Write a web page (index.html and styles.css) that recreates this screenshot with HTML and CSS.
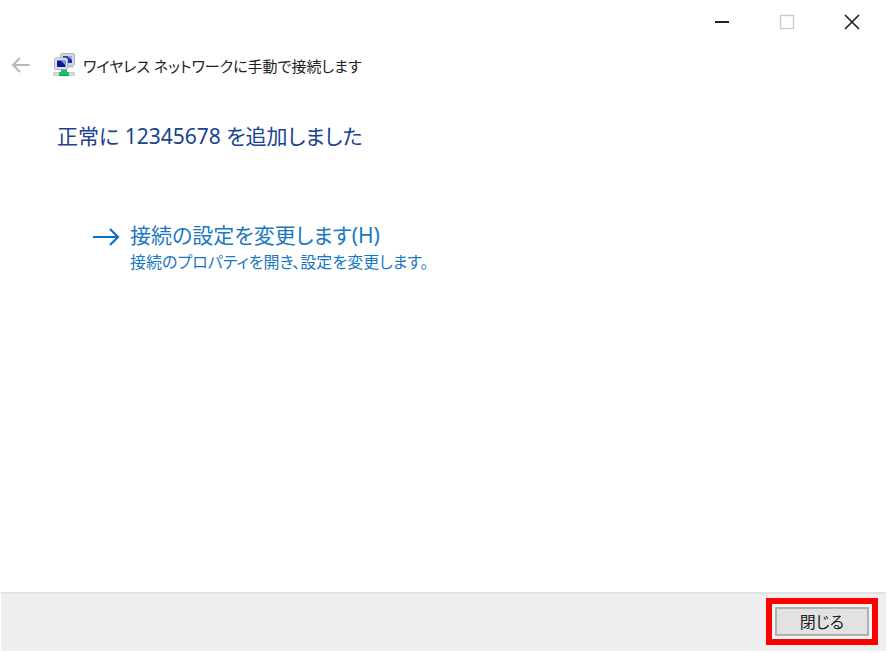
FILE: index.html
```html
<!DOCTYPE html>
<html lang="ja">
<head>
  <meta charset="UTF-8" />
  <meta name="viewport" content="width=device-width, initial-scale=1.0"/>
  <title>ワイヤレス ネットワークに手動で接続します</title>
  <link rel="stylesheet" href="styles.css">
</head>
<body>

<div class="window">
  <div class="titlebar">
    <button class="caption-btn" type="button" aria-label="最小化">
      <svg width="16" height="16" viewBox="0 0 16 16"><path d="M1 8h14" stroke="#222" stroke-width="2"/></svg>
    </button>
    <button class="caption-btn" type="button" aria-label="最大化" disabled>
      <svg width="16" height="16" viewBox="0 0 16 16"><rect x="1.500" y="1.500" width="13" height="13" fill="none" stroke="#c8c8c8" stroke-width="1.300"/></svg>
    </button>
    <button class="caption-btn" type="button" aria-label="閉じる">
      <svg width="16" height="16" viewBox="0 0 16 16"><path d="M1 1l14 14M15 1L1 15" stroke="#222" stroke-width="1.700"/></svg>
    </button>
  </div>

  <header class="header">
    <button class="back" type="button" aria-label="戻る" disabled>
      <svg width="20" height="18" viewBox="0 0 20 18"><path d="M18.500 9H2.500M9 2L2 9l7 7" fill="none" stroke="#b8b8b8" stroke-width="2.200"/></svg>
    </button>
    <svg class="net-icon" width="22" height="24" viewBox="0 0 22 24">
      <rect x="7.500" y=".5" width="14" height="12" rx="1.500" fill="#d5d6da" stroke="#b4b7c0"/>
      <rect x="10" y="3" width="9" height="7" fill="#1c2fb4"/>
      <path d="M14 3h5v4z" fill="#8fa8ee"/>
      <path d="M14 12.500h6l1 2h-7z" fill="#c3c5cb"/>
      <rect x="1.500" y="5" width="13" height="11.500" rx="1.500" fill="#e3e4e8" stroke="#b0b3bc"/>
      <rect x="4" y="7.500" width="8.500" height="6.500" fill="#0a18a8"/>
      <path d="M8 7.500h4.500v5z" fill="#7f9bea"/>
      <rect x="0" y="19" width="22" height="4" fill="#d3d5d5"/>
      <path d="M8 16.500h6v2.500h2v4H6v-4h2z" fill="#1cc06a"/>
      <path d="M6 22.500h10" stroke="#119a50"/>
    </svg>
    <span class="title">ワイヤレス ネットワークに手動で接続します</span>
  </header>

  <main class="content">
    <h1>正常に 12345678 を追加しました</h1>

    <a class="command" href="#" accesskey="h">
      <svg class="arrow" width="27" height="20" viewBox="0 0 27 20"><path d="M0 10h25M17 2l8 8-8 8" fill="none" stroke="#0a70c8" stroke-width="2.200"/></svg>
      <span class="command-text">
        <span class="command-name">接続の設定を変更します(H)</span>
        <span class="command-note">接続のプロパティを開き、設定を変更します。</span>
      </span>
    </a>
  </main>

  <footer class="footer">
    <div class="highlight">
      <button class="close" type="button">閉じる</button>
    </div>
  </footer>
</div>

</body>
</html>
```

FILE: styles.css
```css
* {
  box-sizing: border-box;
}

body {
  margin: 0;
  background: #fff;
  font-family: "Noto Sans", "Noto Sans CJK JP", sans-serif;
  font-feature-settings: "palt";
  color: #222;
}

button {
  font-family: inherit;
  font-feature-settings: inherit;
  color: inherit;
}

svg {
  display: block;
}

.window {
  display: flex;
  flex-direction: column;
  min-height: 100vh;
  padding: 0 1px 2px;
}

.titlebar {
  display: flex;
  justify-content: flex-end;
  padding-right: 2px;
}

.caption-btn {
  display: flex;
  align-items: center;
  justify-content: center;
  width: 65px;
  height: 44px;
  padding: 0;
  border: none;
  background: none;
}

.header {
  display: flex;
  align-items: center;
  height: 42px;
  padding-left: 10px;
}

.back {
  padding: 0;
  border: none;
  background: none;
}

.net-icon {
  margin-left: 22px;
}

.title {
  margin-left: 8px;
  padding-top: 2px;
  font-size: 15px;
  line-height: 24px;
}

.content {
  flex: 1;
  padding: 34px 56px;
}

h1 {
  margin: 0;
  color: #1a4391;
  font-size: 21px;
  font-weight: normal;
  line-height: 32px;
}

.command {
  display: flex;
  gap: 10px;
  margin-top: 67px;
  padding-left: 36px;
  color: #1a78c2;
  text-decoration: none;
}

.arrow {
  margin-top: 8px;
}

.command-text {
  display: flex;
  flex-direction: column;
}

.command-name {
  font-size: 21px;
  line-height: 32px;
}

.command-note {
  font-size: 16px;
  line-height: 22px;
}

.footer {
  display: flex;
  justify-content: flex-end;
  padding: 4px 8px 6px;
  border-top: 2px solid #e2e2e2;
  background: #efefef;
}

.highlight {
  padding: 3px;
  border: 6px solid #f00;
  background: #f4f4f4;
}

.close {
  display: block;
  width: 94px;
  height: 29px;
  padding: 0;
  border: 2px solid #b0b0b0;
  background: #e2e2e2;
  font-size: 16px;
  line-height: 24px;
}
```
